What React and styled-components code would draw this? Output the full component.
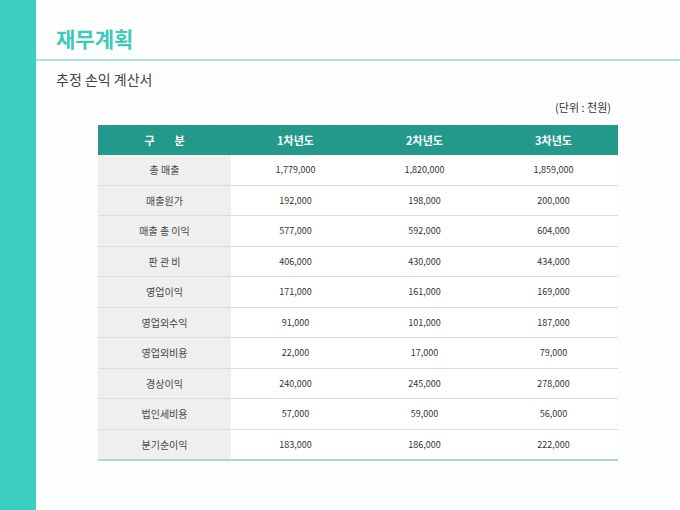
import React from "react";
import styled, { createGlobalStyle } from "styled-components";

const GlobalStyle = createGlobalStyle`
  html, body {
    margin: 0;
    padding: 0;
  }
  body {
    font-family: "Noto Sans CJK KR", "Noto Sans", sans-serif;
    color: #333;
  }
`;

const rows = [
  ["총 매출", "1,779,000", "1,820,000", "1,859,000"],
  ["매출원가", "192,000", "198,000", "200,000"],
  ["매출 총 이익", "577,000", "592,000", "604,000"],
  ["판 관 비", "406,000", "430,000", "434,000"],
  ["영업이익", "171,000", "161,000", "169,000"],
  ["영업외수익", "91,000", "101,000", "187,000"],
  ["영업외비용", "22,000", "17,000", "79,000"],
  ["경상이익", "240,000", "245,000", "278,000"],
  ["법인세비용", "57,000", "59,000", "56,000"],
  ["분기순이익", "183,000", "186,000", "222,000"],
];

function App() {
  return (
    <Page>
      <GlobalStyle />
      <SideBar />
      <Main>
        <TitleBar>
          <h1>재무계획</h1>
        </TitleBar>
        <Content>
          <h2>추정 손익 계산서</h2>
          <Unit>(단위 : 천원)</Unit>
          <Table>
            <thead>
              <tr>
                <HeadCell>구&nbsp;&nbsp;&nbsp;&nbsp;&nbsp;&nbsp;&nbsp;&nbsp;분</HeadCell>
                <HeadCell>1차년도</HeadCell>
                <HeadCell>2차년도</HeadCell>
                <HeadCell>3차년도</HeadCell>
              </tr>
            </thead>
            <tbody>
              {rows.map((r, i) => (
                <Row key={i} $last={i === rows.length - 1}>
                  <LabelCell>{r[0]}</LabelCell>
                  <ValueCell>{r[1]}</ValueCell>
                  <ValueCell>{r[2]}</ValueCell>
                  <ValueCell>{r[3]}</ValueCell>
                </Row>
              ))}
            </tbody>
          </Table>
        </Content>
      </Main>
    </Page>
  );
}

const Page = styled.div`
  display: flex;
  width: 680px;
  height: 510px;
  overflow: hidden;
  background-color: #fff;
  background-image: linear-gradient(rgba(0, 0, 0, 0.012) 1px, transparent 1px),
    linear-gradient(90deg, rgba(0, 0, 0, 0.012) 1px, transparent 1px);
  background-size: 6px 6px;
`;

const SideBar = styled.div`
  width: 36px;
  flex-shrink: 0;
  background: #3ccfc1;
`;

const Main = styled.div`
  flex: 1;
  display: flex;
  flex-direction: column;
`;

const TitleBar = styled.div`
  height: 61px;
  border-bottom: 2px solid #a6e3dc;
  box-sizing: border-box;
  padding: 23px 0 0 20px;

  h1 {
    margin: 0;
    font-size: 21px;
    line-height: 30px;
    font-weight: bold;
    color: #3cc9b9;
  }
`;

const Content = styled.div`
  padding: 7px 62px 0 20px;
  display: flex;
  flex-direction: column;

  h2 {
    margin: 0;
    font-size: 14px;
    line-height: 22px;
    font-weight: normal;
    color: #444;
  }
`;

const Unit = styled.div`
  align-self: flex-end;
  margin-top: 10px;
  margin-right: 7px;
  font-size: 11px;
  line-height: 14px;
  color: #333;
`;

const Table = styled.table`
  margin: 11px 0 0 42px;
  width: 520px;
  border-collapse: collapse;
  table-layout: fixed;
`;

const HeadCell = styled.th`
  height: 30px;
  padding: 0;
  background: #23998b;
  color: #fff;
  font-size: 11px;
  font-weight: bold;
  text-align: center;
  &:first-child {
    width: 133px;
  }
`;

const Row = styled.tr`
  td {
    height: 29.5px;
    border-bottom: ${(p) => (p.$last ? "2px solid #a9d9d3" : "1px solid #dcdcdc")};
  }
`;

const LabelCell = styled.td`
  padding: 0;
  background: #efefef;
  text-align: center;
  font-size: 10px;
  color: #444;
`;

const ValueCell = styled.td`
  padding: 0;
  background: #fff;
  text-align: center;
  font-size: 9px;
  color: #333;
`;

export default App;
